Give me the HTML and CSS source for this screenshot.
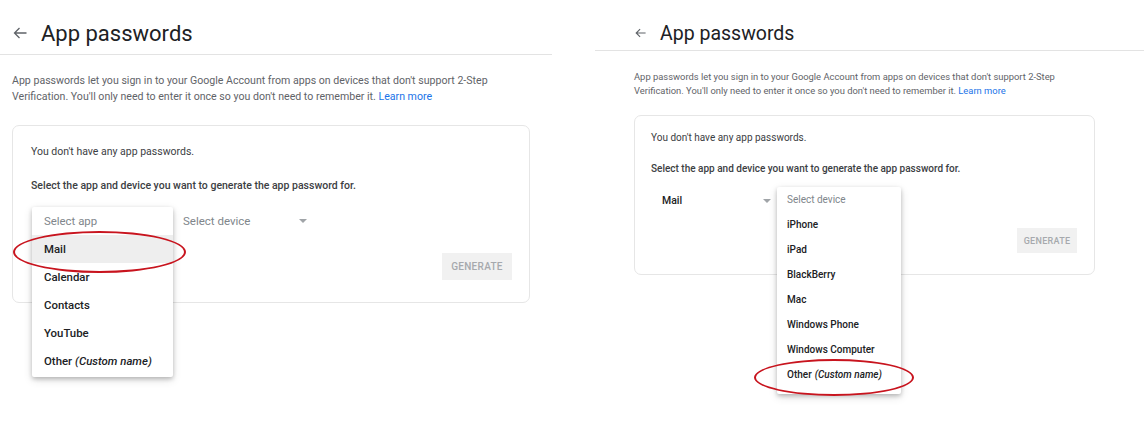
FILE: index.html
```html
<!DOCTYPE html>
<html>
<head>
<meta charset="utf-8">
<link rel="stylesheet" href="styles.css">
</head>
<body class="page">
  <section class="panel panel-left">
    <header class="head">
      <svg class="back" viewBox="0 0 14 12" width="14" height="12"><path d="M13.5 6H1.5M6.5 1L1.5 6l5 5" fill="none" stroke="#5f6368" stroke-width="1.3"/></svg>
      <h1 class="title">App passwords</h1>
    </header>
    <p class="desc">App passwords let you sign in to your Google Account from apps on devices that don't support 2-Step<br>Verification. You'll only need to enter it once so you don't need to remember it. <a class="link">Learn more</a></p>
    <div class="card">
      <p class="note">You don't have any app passwords.</p>
      <p class="prompt">Select the app and device you want to generate the app password for.</p>
      <div class="row">
        <div class="field field-app"></div>
        <div class="field field-dev"><span class="ph">Select device</span><span class="caret"></span></div>
      </div>
      <div class="actions"><button class="gen">GENERATE</button></div>
      <ul class="menu">
        <li class="item ph">Select app</li>
        <li class="item sel">Mail</li>
        <li class="item">Calendar</li>
        <li class="item">Contacts</li>
        <li class="item">YouTube</li>
        <li class="item">Other <i>(Custom name)</i></li>
      </ul>
      <div class="ring"></div>
    </div>
  </section>

  <section class="panel panel-right">
    <header class="head">
      <svg class="back" viewBox="0 0 14 12" width="11" height="10"><path d="M13.5 6H1.5M6.5 1L1.5 6l5 5" fill="none" stroke="#5f6368" stroke-width="1.4"/></svg>
      <h1 class="title">App passwords</h1>
    </header>
    <p class="desc">App passwords let you sign in to your Google Account from apps on devices that don't support 2-Step<br>Verification. You'll only need to enter it once so you don't need to remember it. <a class="link">Learn more</a></p>
    <div class="card">
      <p class="note">You don't have any app passwords.</p>
      <p class="prompt">Select the app and device you want to generate the app password for.</p>
      <div class="row">
        <div class="field field-app"><span class="val">Mail</span><span class="caret"></span></div>
      </div>
      <div class="actions"><button class="gen">GENERATE</button></div>
      <ul class="menu">
        <li class="item ph">Select device</li>
        <li class="item">iPhone</li>
        <li class="item">iPad</li>
        <li class="item">BlackBerry</li>
        <li class="item">Mac</li>
        <li class="item">Windows Phone</li>
        <li class="item">Windows Computer</li>
        <li class="item">Other <i>(Custom name)</i></li>
      </ul>
      <div class="ring"></div>
    </div>
  </section>
</body>
</html>
```

FILE: styles.css
```css
* { box-sizing: border-box; }
html, body { margin: 0; padding: 0; background: #fff; }
.page {
  display: flex;
  font-family: Roboto, "Liberation Sans", Arial, sans-serif;
  width: 1144px;
  height: 423px;
  overflow: hidden;
}
.panel { display: flex; flex-direction: column; }
.panel-left { width: 552px; }
.panel-right { width: 549px; margin-left: 43px; }

.head {
  display: flex;
  align-items: center;
  border-bottom: 1px solid #e3e3e3;
}
.title { margin: 0; font-weight: 400; color: #202124; }
.desc { margin: 0; color: #5f6368; white-space: nowrap; }
.link { color: #1a73e8; text-decoration: none; }
.card {
  position: relative;
  border: 1px solid #e6e6e6;
  border-radius: 7px;
  display: flex;
  flex-direction: column;
}
.note { margin: 0; color: #3c4043; }
.prompt { margin: 0; color: #3c4043; font-weight: 500; }
.row { display: flex; align-items: center; }
.field { display: flex; align-items: center; position: relative; height: 100%; }
.ph { color: #80868b; }
.val { color: #202124; font-weight: 500; }
.caret {
  position: absolute;
  width: 0; height: 0;
  border-left: 4px solid transparent;
  border-right: 4px solid transparent;
  border-top: 4px solid #a0a4a8;
}
.actions { display: flex; justify-content: flex-end; }
.gen {
  border: 0;
  background: #f1f1f1;
  color: #a6a9ad;
  font-family: inherit;
  font-weight: 500;
  letter-spacing: 0.3px;
  padding: 0;
}
.menu {
  position: absolute;
  margin: 0;
  list-style: none;
  background: #fff;
  box-shadow: 0 2px 4px rgba(0,0,0,0.22), 0 3px 10px rgba(0,0,0,0.12);
  border-radius: 2px;
}
.item { display: flex; align-items: center; color: #202124; font-weight: 500; white-space: nowrap; }
.item.ph { color: #80868b; font-weight: 400; }
.item.sel { background: #eeeeee; }
.item i { font-weight: 500; margin-left: 3px; }
.ring {
  position: absolute;
  border: 2px solid #c8141e;
  border-radius: 50%;
}

/* left panel */
.panel-left .head { height: 55px; padding: 12px 0 0 13px; }
.panel-left .back { margin-right: 14px; }
.panel-left .title { font-size: 22px; }
.panel-left .desc { font-size: 10.6px; line-height: 16px; margin: 18px 0 0 12px; }
.panel-left .card { margin: 20px 0 0 12px; width: 518px; padding: 18px 17px 22px 18px; }
.panel-left .note, .panel-left .prompt { font-size: 10.5px; line-height: 16px; }
.panel-left .prompt { margin-top: 18px; }
.panel-left .row { margin-top: 13px; height: 28px; font-size: 11.5px; }
.panel-left .field-app { width: 152px; }
.panel-left .field-dev { width: 128px; }
.panel-left .field-dev .caret { left: 116px; top: 12px; }
.panel-left .actions { margin-top: 18px; }
.panel-left .gen { width: 70px; height: 27px; font-size: 10px; }
.panel-left .menu { left: 19px; top: 81px; width: 141px; padding: 0 0 2px; }
.panel-left .item { height: 28px; padding-left: 12px; font-size: 11.4px; }
.panel-left .ring { left: 0; top: 105px; width: 173px; height: 42px; }

/* right panel */
.panel-right .head { height: 51px; padding: 16px 0 0 40px; }
.panel-right .back { margin-right: 14px; }
.panel-right .title { font-size: 19.5px; }
.panel-right .desc { font-size: 9.4px; line-height: 14px; margin: 19px 0 0 39px; }
.panel-right .card { margin: 17px 0 0 39px; width: 461px; padding: 15px 17px 21px 16px; }
.panel-right .note, .panel-right .prompt { font-size: 10px; line-height: 14px; }
.panel-right .prompt { margin-top: 17px; }
.panel-right .row { margin-top: 12px; height: 25px; font-size: 10.5px; }
.panel-right .field-app { width: 121px; padding-left: 11px; }
.panel-right .field-app .caret { left: 112px; top: 11px; }
.panel-right .actions { margin-top: 15px; }
.panel-right .gen { width: 60px; height: 25px; font-size: 9px; }
.panel-right .menu { left: 142px; top: 71px; width: 124px; padding: 0 0 7px; }
.panel-right .item { height: 25px; padding-left: 10px; font-size: 10px; }
.panel-right .ring { left: 119px; top: 243px; width: 160px; height: 37px; }
```
